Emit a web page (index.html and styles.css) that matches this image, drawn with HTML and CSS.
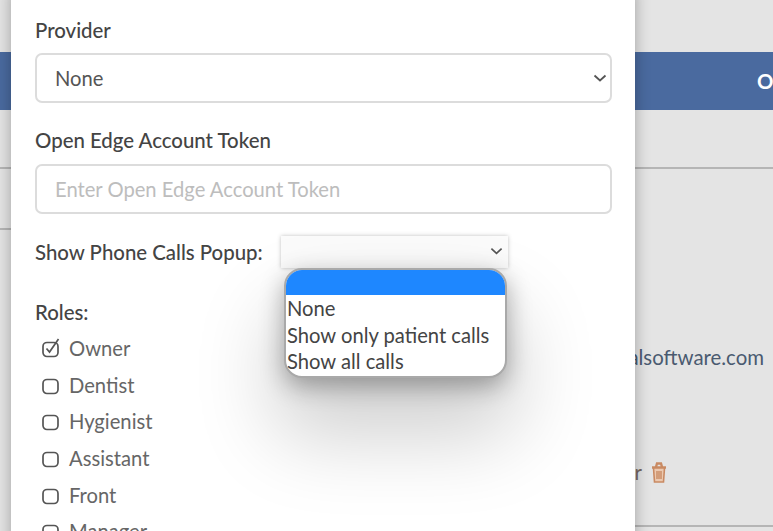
FILE: index.html
```html
<!DOCTYPE html>
<html lang="en">
<head>
    <meta charset="UTF-8">
    <title>User Settings</title>
    <link rel="stylesheet" href="styles.css">
</head>
<body>
    <div class="page">
        <div class="table-head">Options</div>
        <div class="table-spacer"></div>
        <div class="table-body">
            <div class="left-cell"></div>
            <div class="right-cell">
                <div class="email">info@dentalsoftware.com</div>
                <div class="delete-row">
                    <span>Owner</span>
                    <svg class="trash" viewBox="0 0 16 21" width="16" height="21">
                        <path d="M1 5.500h14M5 5l1-3.500h4l1 3.500" fill="none" stroke="#c98a63" stroke-width="2.400"/>
                        <path d="M2.500 6l1 14h9l1-14z" fill="#ecc9b0" stroke="#c98a63" stroke-width="1.600"/>
                        <path d="M6 9v8M8 9v8M10 9v8" fill="none" stroke="#c98a63" stroke-width="1.400"/>
                    </svg>
                </div>
            </div>
        </div>
    </div>

    <div class="modal">
        <label class="field-label first">Provider</label>
        <div class="select-wrap">
            <select class="form-control">
                <option>None</option>
            </select>
            <svg class="chevron" viewBox="0 0 14 8" width="14" height="8">
                <path d="M1.500 1.500l5.500 5 5.500-5" fill="none" stroke="#555" stroke-width="1.800"/>
            </svg>
        </div>

        <label class="field-label">Open Edge Account Token</label>
        <input class="form-control" type="text" placeholder="Enter Open Edge Account Token">

        <div class="popup-row">
            <label class="field-label inline">Show Phone Calls Popup:</label>
            <div class="select-wrap small">
                <select class="popup-select">
                    <option></option>
                </select>
                <svg class="chevron" viewBox="0 0 14 8" width="13" height="8">
                    <path d="M1.500 1.500l5.500 5 5.500-5" fill="none" stroke="#555" stroke-width="1.800"/>
                </svg>
            </div>
        </div>

        <div class="roles-label">Roles:</div>
        <ul class="roles">
            <li>
                <svg class="check" viewBox="0 0 20 20" width="20" height="20">
                    <rect x="2" y="4.500" width="15" height="14" rx="4" fill="none" stroke="#555" stroke-width="1.700"/>
                    <path d="M5.500 10.500l3 3.500 9-13" fill="none" stroke="#555" stroke-width="1.700"/>
                </svg>
                Owner
            </li>
            <li>
                <svg class="check" viewBox="0 0 20 20" width="20" height="20">
                    <rect x="2" y="4.500" width="15" height="14" rx="4" fill="none" stroke="#555" stroke-width="1.700"/>
                </svg>
                Dentist
            </li>
            <li>
                <svg class="check" viewBox="0 0 20 20" width="20" height="20">
                    <rect x="2" y="4.500" width="15" height="14" rx="4" fill="none" stroke="#555" stroke-width="1.700"/>
                </svg>
                Hygienist
            </li>
            <li>
                <svg class="check" viewBox="0 0 20 20" width="20" height="20">
                    <rect x="2" y="4.500" width="15" height="14" rx="4" fill="none" stroke="#555" stroke-width="1.700"/>
                </svg>
                Assistant
            </li>
            <li>
                <svg class="check" viewBox="0 0 20 20" width="20" height="20">
                    <rect x="2" y="4.500" width="15" height="14" rx="4" fill="none" stroke="#555" stroke-width="1.700"/>
                </svg>
                Front
            </li>
            <li>
                <svg class="check" viewBox="0 0 20 20" width="20" height="20">
                    <rect x="2" y="4.500" width="15" height="14" rx="4" fill="none" stroke="#555" stroke-width="1.700"/>
                </svg>
                Manager
            </li>
        </ul>

        <div class="dropdown">
            <div class="dropdown-item selected">&nbsp;</div>
            <div class="dropdown-item">None</div>
            <div class="dropdown-item">Show only patient calls</div>
            <div class="dropdown-item">Show all calls</div>
        </div>
    </div>
</body>
</html>
```

FILE: styles.css
```css
html, body {
    height: 100%;
    margin: 0;
    overflow: hidden;
}

body {
    font-family: "Lato", sans-serif;
    font-size: 20.400px;
    color: #444;
    background: #e4e4e4;
}

.page {
    padding-top: 52px;
    height: 531px;
    box-sizing: border-box;
}

.table-head {
    height: 58px;
    line-height: 58px;
    padding-left: 757px;
    background: #4a6a9f;
    color: #fff;
    font-weight: 700;
    white-space: nowrap;
    overflow: hidden;
}

.table-spacer {
    height: 59px;
    box-sizing: border-box;
    border-bottom: 2px solid #b5b5b5;
}

.table-body {
    display: grid;
    grid-template-columns: 300px 1fr;
    white-space: nowrap;
}

.left-cell {
    height: 59px;
    border-bottom: 2px solid #b5b5b5;
}

.right-cell {
    height: 358px;
    box-sizing: border-box;
    border-bottom: 2px solid #b5b5b5;
    padding-top: 176px;
}

.email {
    line-height: 24px;
    padding-right: 9px;
    text-align: right;
    color: #4a5a70;
}

.delete-row {
    display: flex;
    justify-content: flex-end;
    align-items: center;
    height: 24px;
    margin-top: 91px;
    padding-right: 106px;
    color: #75675f;
}

.trash {
    margin-left: 9px;
}

.modal {
    position: absolute;
    top: -10px;
    left: 11px;
    width: 624px;
    height: 620px;
    box-sizing: border-box;
    padding: 10px 23px 0 24px;
    overflow: hidden;
    background: #fff;
    box-shadow: 0 0 14px rgba(0, 0, 0, 0.3);
}

.field-label {
    display: block;
    font-weight: 500;
    line-height: 24px;
    margin: 25px 0 11.500px;
    color: #444;
}

.field-label.first {
    margin-top: 18px;
    margin-bottom: 11px;
}

.field-label.inline {
    display: inline;
    margin: 0;
}

.select-wrap {
    position: relative;
}

.select-wrap .chevron {
    position: absolute;
    right: 5px;
    top: 21px;
}

.select-wrap.small .chevron {
    right: 5px;
    top: 11px;
}

.form-control {
    display: block;
    width: 100%;
    height: 50px;
    box-sizing: border-box;
    padding: 0 18px;
    appearance: none;
    font-family: "Lato", sans-serif;
    font-size: 20.200px;
    color: #555;
    background: #fff;
    border: 2px solid #dcdcdc;
    border-radius: 7px;
}

.form-control::placeholder {
    color: #bdbdbd;
}

.popup-row {
    display: flex;
    align-items: center;
    gap: 18px;
    margin-top: 22px;
}

.popup-select {
    display: block;
    width: 227px;
    height: 32px;
    appearance: none;
    background: #fbfbfb;
    border: none;
    box-shadow: 0 0 4px rgba(0, 0, 0, 0.25);
    font-family: "Lato", sans-serif;
    font-size: 18px;
}

.roles-label {
    margin-top: 32px;
    line-height: 24px;
    font-weight: 500;
}

.roles {
    list-style: none;
    margin: 6.500px 0 0;
    padding: 0 0 0 6px;
}

.roles li {
    display: flex;
    align-items: center;
    gap: 8px;
    height: 36.600px;
    font-size: 20.200px;
    color: #666;
}

.dropdown {
    position: absolute;
    left: 273px;
    top: 278px;
    width: 223px;
    box-sizing: border-box;
    height: 110px;
    overflow: hidden;
    background: #fff;
    border: 2px solid #a9a9a9;
    border-radius: 18px;
    box-shadow: 0 50px 80px 10px rgba(0, 0, 0, 0.18), 0 8px 24px rgba(0, 0, 0, 0.32);
    font-size: 20.200px;
    line-height: 26.500px;
    color: #444;
}

.dropdown-item {
    padding-left: 1px;
}

.dropdown-item.selected {
    background: #1e87ff;
    height: 25px;
}
```
